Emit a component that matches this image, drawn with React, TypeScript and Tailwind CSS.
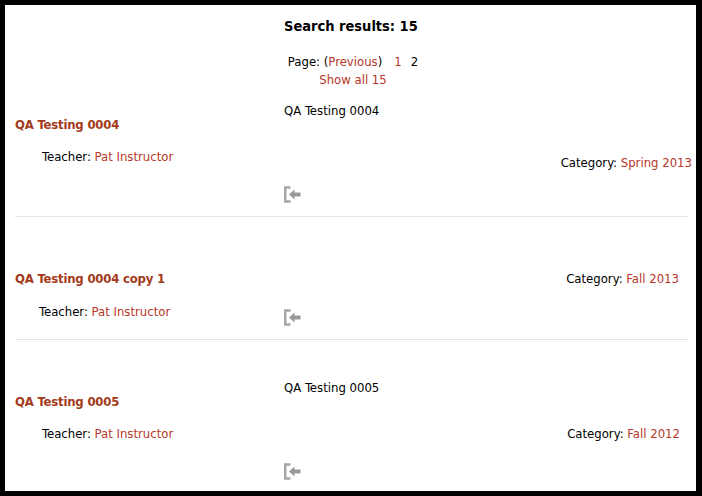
const rows = [
  {
    title: "QA Testing 0004",
    summary: "QA Testing 0004",
    category: "Spring 2013",
    titleClass: "pt-[16px]",
    teacherClass: "mt-[14px] ml-[27px]",
    summaryClass: "pt-[2px]",
    iconClass: "mt-[66px]",
    categoryClass: "pt-[54px] -mr-[4px]",
    rowClass: "h-[117px]",
  },
  {
    title: "QA Testing 0004 copy 1",
    summary: "",
    category: "Fall 2013",
    titleClass: "pt-[53px]",
    teacherClass: "mt-[15px] ml-[24px]",
    summaryClass: "",
    iconClass: "mt-[92px]",
    categoryClass: "pt-[53px] mr-[9px]",
    rowClass: "h-[123px]",
  },
  {
    title: "QA Testing 0005",
    summary: "QA Testing 0005",
    category: "Fall 2012",
    titleClass: "pt-[53px]",
    teacherClass: "mt-[14px] ml-[27px]",
    summaryClass: "pt-[39px]",
    iconClass: "mt-[66px]",
    categoryClass: "pt-[85px] mr-[8px]",
    rowClass: "flex-1",
  },
];

function ExitIcon() {
  return (
    <svg width="17" height="17" viewBox="0 0 17 17" className="block">
      <path d="M6.5 1.5H1.25V15.5H6.5" fill="none" stroke="#a6a6a6" strokeWidth="2.5" />
      <path d="M5 8.5L10.5 3.5V6.5H16.5V10.5H10.5V13.5Z" fill="#999999" />
    </svg>
  );
}

export default function App() {
  return (
    <div className="flex h-[496px] w-[702px] flex-col overflow-hidden border-t-[5px] border-r-[6px] border-b-[5px] border-l-[5px] border-black bg-white font-['DejaVu_Sans_Condensed','DejaVu_Sans',sans-serif] text-[13px] leading-[18px] text-black">
      <div className="h-[95px] shrink-0 pl-[279px]">
        <h2 className="pt-[11px] text-[14.5px] leading-[20px] font-bold">Search results: 15</h2>
        <div className="mt-[17px] ml-[2px] w-[134px] text-center">
          <div className="whitespace-nowrap">
            Page: (<a className="text-[#b5382a]">Previous</a>)
            <a className="ml-[12px] text-[#b5382a]">1</a>
            <span className="ml-[9px]">2</span>
          </div>
          <a className="text-[#b5382a]">Show all 15</a>
        </div>
      </div>
      {rows.map((row, i) => (
        <div key={row.title} className={`mr-[8px] ml-[10px] flex shrink-0 ${row.rowClass} ${i < 2 ? "border-b border-[#e3e3e3]" : ""}`}>
          <div className="w-[269px] shrink-0">
            <h3 className={`${row.titleClass} text-[13px] leading-[18px] font-bold tracking-[-0.2px] text-[#a33a1a]`}>{row.title}</h3>
            <div className={row.teacherClass}>
              Teacher: <a className="text-[#b5382a]">Pat Instructor</a>
            </div>
          </div>
          <div className="flex-1">
            <div className={row.summaryClass}>{row.summary}</div>
            <div className={row.iconClass}>
              <ExitIcon />
            </div>
          </div>
          <div className={`whitespace-nowrap ${row.categoryClass}`}>
            Category: <a className="text-[#b5382a]">{row.category}</a>
          </div>
        </div>
      ))}
    </div>
  );
}
